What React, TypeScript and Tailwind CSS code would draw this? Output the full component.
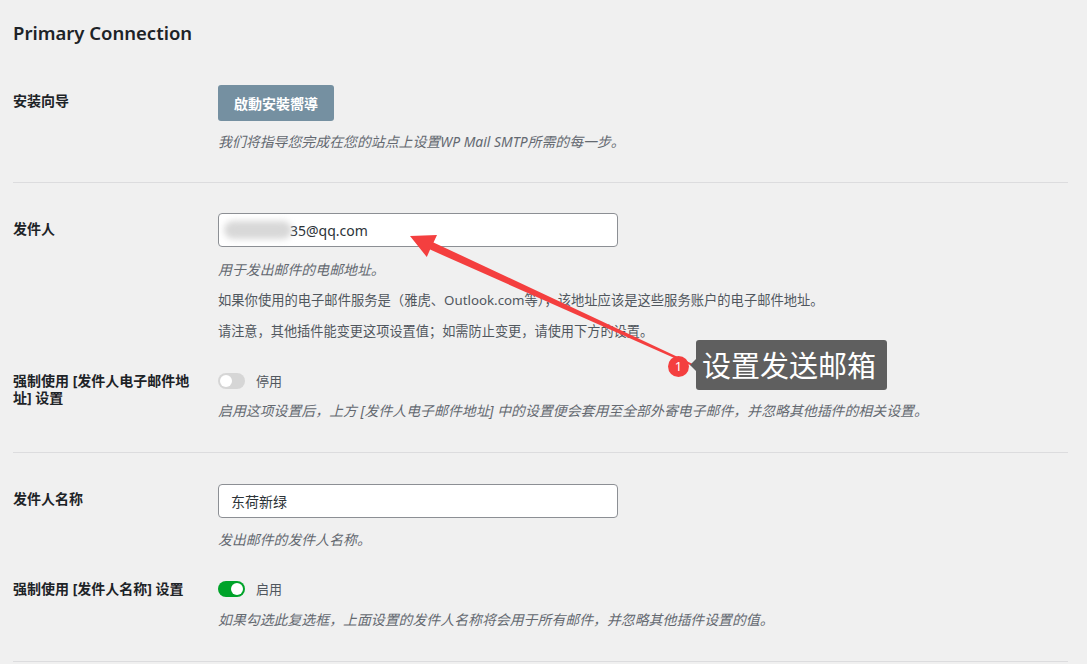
import React from "react";

const font = { fontFamily: '"Noto Sans", "Noto Sans CJK SC", sans-serif' };

function Toggle({ on }: { on?: boolean }) {
  return (
    <div
      className={
        on
          ? "w-[27px] h-[16px] rounded-full bg-[#00a32a] flex items-center justify-end px-[2px]"
          : "w-[27px] h-[16px] rounded-full bg-[#d6d6d6] flex items-center justify-start px-[2px]"
      }
    >
      <div className="w-[12px] h-[12px] rounded-full bg-white" />
    </div>
  );
}

function Desc({ children, className = "" }: { children: React.ReactNode; className?: string }) {
  return <p className={"text-[13.9px] leading-[18px] italic text-[#646970] " + className}>{children}</p>;
}

function Divider() {
  return <div className="h-px bg-[#dcdcde]" />;
}

export default function App() {
  return (
    <div className="relative w-[1087px] h-[664px] overflow-hidden bg-[#f0f0f0] text-[#1d2327]" style={font}>
      <div className="pl-[13px] pr-[19px]">
        <h2 className="pt-[21px] text-[18.5px] leading-[24px] font-semibold text-[#1d2327]">Primary Connection</h2>

        {/* setup wizard */}
        <div className="flex mt-[40px]">
          <div className="w-[205px] shrink-0 pt-[6px] text-[14px] leading-[20px] font-bold">安装向导</div>
          <div>
            <button className="h-[36px] px-[16px] rounded-[3px] bg-[#7590a1] text-white text-[14px] font-bold">
              啟動安裝嚮導
            </button>
            <Desc className="mt-[12px]">我们将指导您完成在您的站点上设置WP Mail SMTP所需的每一步。</Desc>
          </div>
        </div>
        <div className="mt-[31px]">
          <Divider />
        </div>

        {/* from email */}
        <div className="flex mt-[30px]">
          <div className="w-[205px] shrink-0 pt-[6px] text-[14px] leading-[20px] font-bold">发件人</div>
          <div>
            <div className="w-[400px] h-[34px] rounded-[4px] border border-[#8c8f94] bg-white flex items-center pl-[5px] text-[14px] text-[#2c3338]">
              <span className="w-[68px] h-[18px] rounded-full bg-[#d8d8d8] blur-[3px] -mr-[2px]" />
              <span>35@qq.com</span>
            </div>
            <Desc className="mt-[14px]">用于发出邮件的电邮地址。</Desc>
            <p className="mt-[12px] text-[13.3px] leading-[18px] text-[#50575e]">
              如果你使用的电子邮件服务是（雅虎、Outlook.com等），该地址应该是这些服务账户的电子邮件地址。
            </p>
            <p className="mt-[13px] text-[13.2px] leading-[18px] text-[#50575e]">
              请注意，其他插件能变更这项设置值；如需防止变更，请使用下方的设置。
            </p>
          </div>
        </div>

        <div className="flex mt-[32px]">
          <div className="w-[205px] shrink-0">
            <div className="w-[185px] text-[14px] leading-[17px] font-bold">强制使用 [发件人电子邮件地址] 设置</div>
          </div>
          <div>
            <div className="flex items-center gap-[11px]">
              <Toggle />
              <span className="text-[13px] leading-[18px] text-[#50575e]">停用</span>
            </div>
            <Desc className="mt-[12px]">
              启用这项设置后，上方 [发件人电子邮件地址] 中的设置便会套用至全部外寄电子邮件，并忽略其他插件的相关设置。
            </Desc>
          </div>
        </div>
        <div className="mt-[32px]">
          <Divider />
        </div>

        {/* from name */}
        <div className="flex mt-[31px]">
          <div className="w-[205px] shrink-0 pt-[5px] text-[14px] leading-[20px] font-bold">发件人名称</div>
          <div>
            <div className="w-[400px] h-[34px] rounded-[4px] border border-[#8c8f94] bg-white flex items-center pl-[12px] text-[14px] text-[#2c3338]">
              东荷新绿
            </div>
            <Desc className="mt-[13px]">发出邮件的发件人名称。</Desc>
          </div>
        </div>

        <div className="flex mt-[31px]">
          <div className="w-[205px] shrink-0 text-[14px] leading-[17px] font-bold">强制使用 [发件人名称] 设置</div>
          <div>
            <div className="flex items-center gap-[11px]">
              <Toggle on />
              <span className="text-[13px] leading-[18px] text-[#50575e]">启用</span>
            </div>
            <Desc className="mt-[13px]">如果勾选此复选框，上面设置的发件人名称将会用于所有邮件，并忽略其他插件设置的值。</Desc>
          </div>
        </div>
        <div className="mt-[32px]">
          <Divider />
        </div>
      </div>

      {/* annotation overlay */}
      <svg className="absolute left-0 top-0 pointer-events-none" width="1087" height="664">
        <line x1="700" y1="368" x2="726" y2="383" stroke="#6b2630" strokeWidth="1" />
        <polygon
          points="410,236 437,235 433.5,242.4 695.4,365.2 694.6,366.9 430.1,249.6 426.8,257"
          fill="#f43f3f"
        />
      </svg>
      <div className="absolute left-[668px] top-[356px] w-[21px] h-[21px] rounded-full bg-[#f43f3f] flex items-center justify-center text-white text-[13px] leading-none">
        1
      </div>
      <div className="absolute left-[696px] top-[340px] w-[191px] h-[50px] rounded-[3px] bg-[#5f5f5f] flex items-center pl-[6px]">
        <div className="absolute -left-[6px] top-[19px] w-0 h-0 border-y-[6px] border-y-transparent border-r-[6px] border-r-[#5f5f5f]" />
        <span className="text-white text-[29px] leading-none">设置发送邮箱</span>
      </div>
    </div>
  );
}
